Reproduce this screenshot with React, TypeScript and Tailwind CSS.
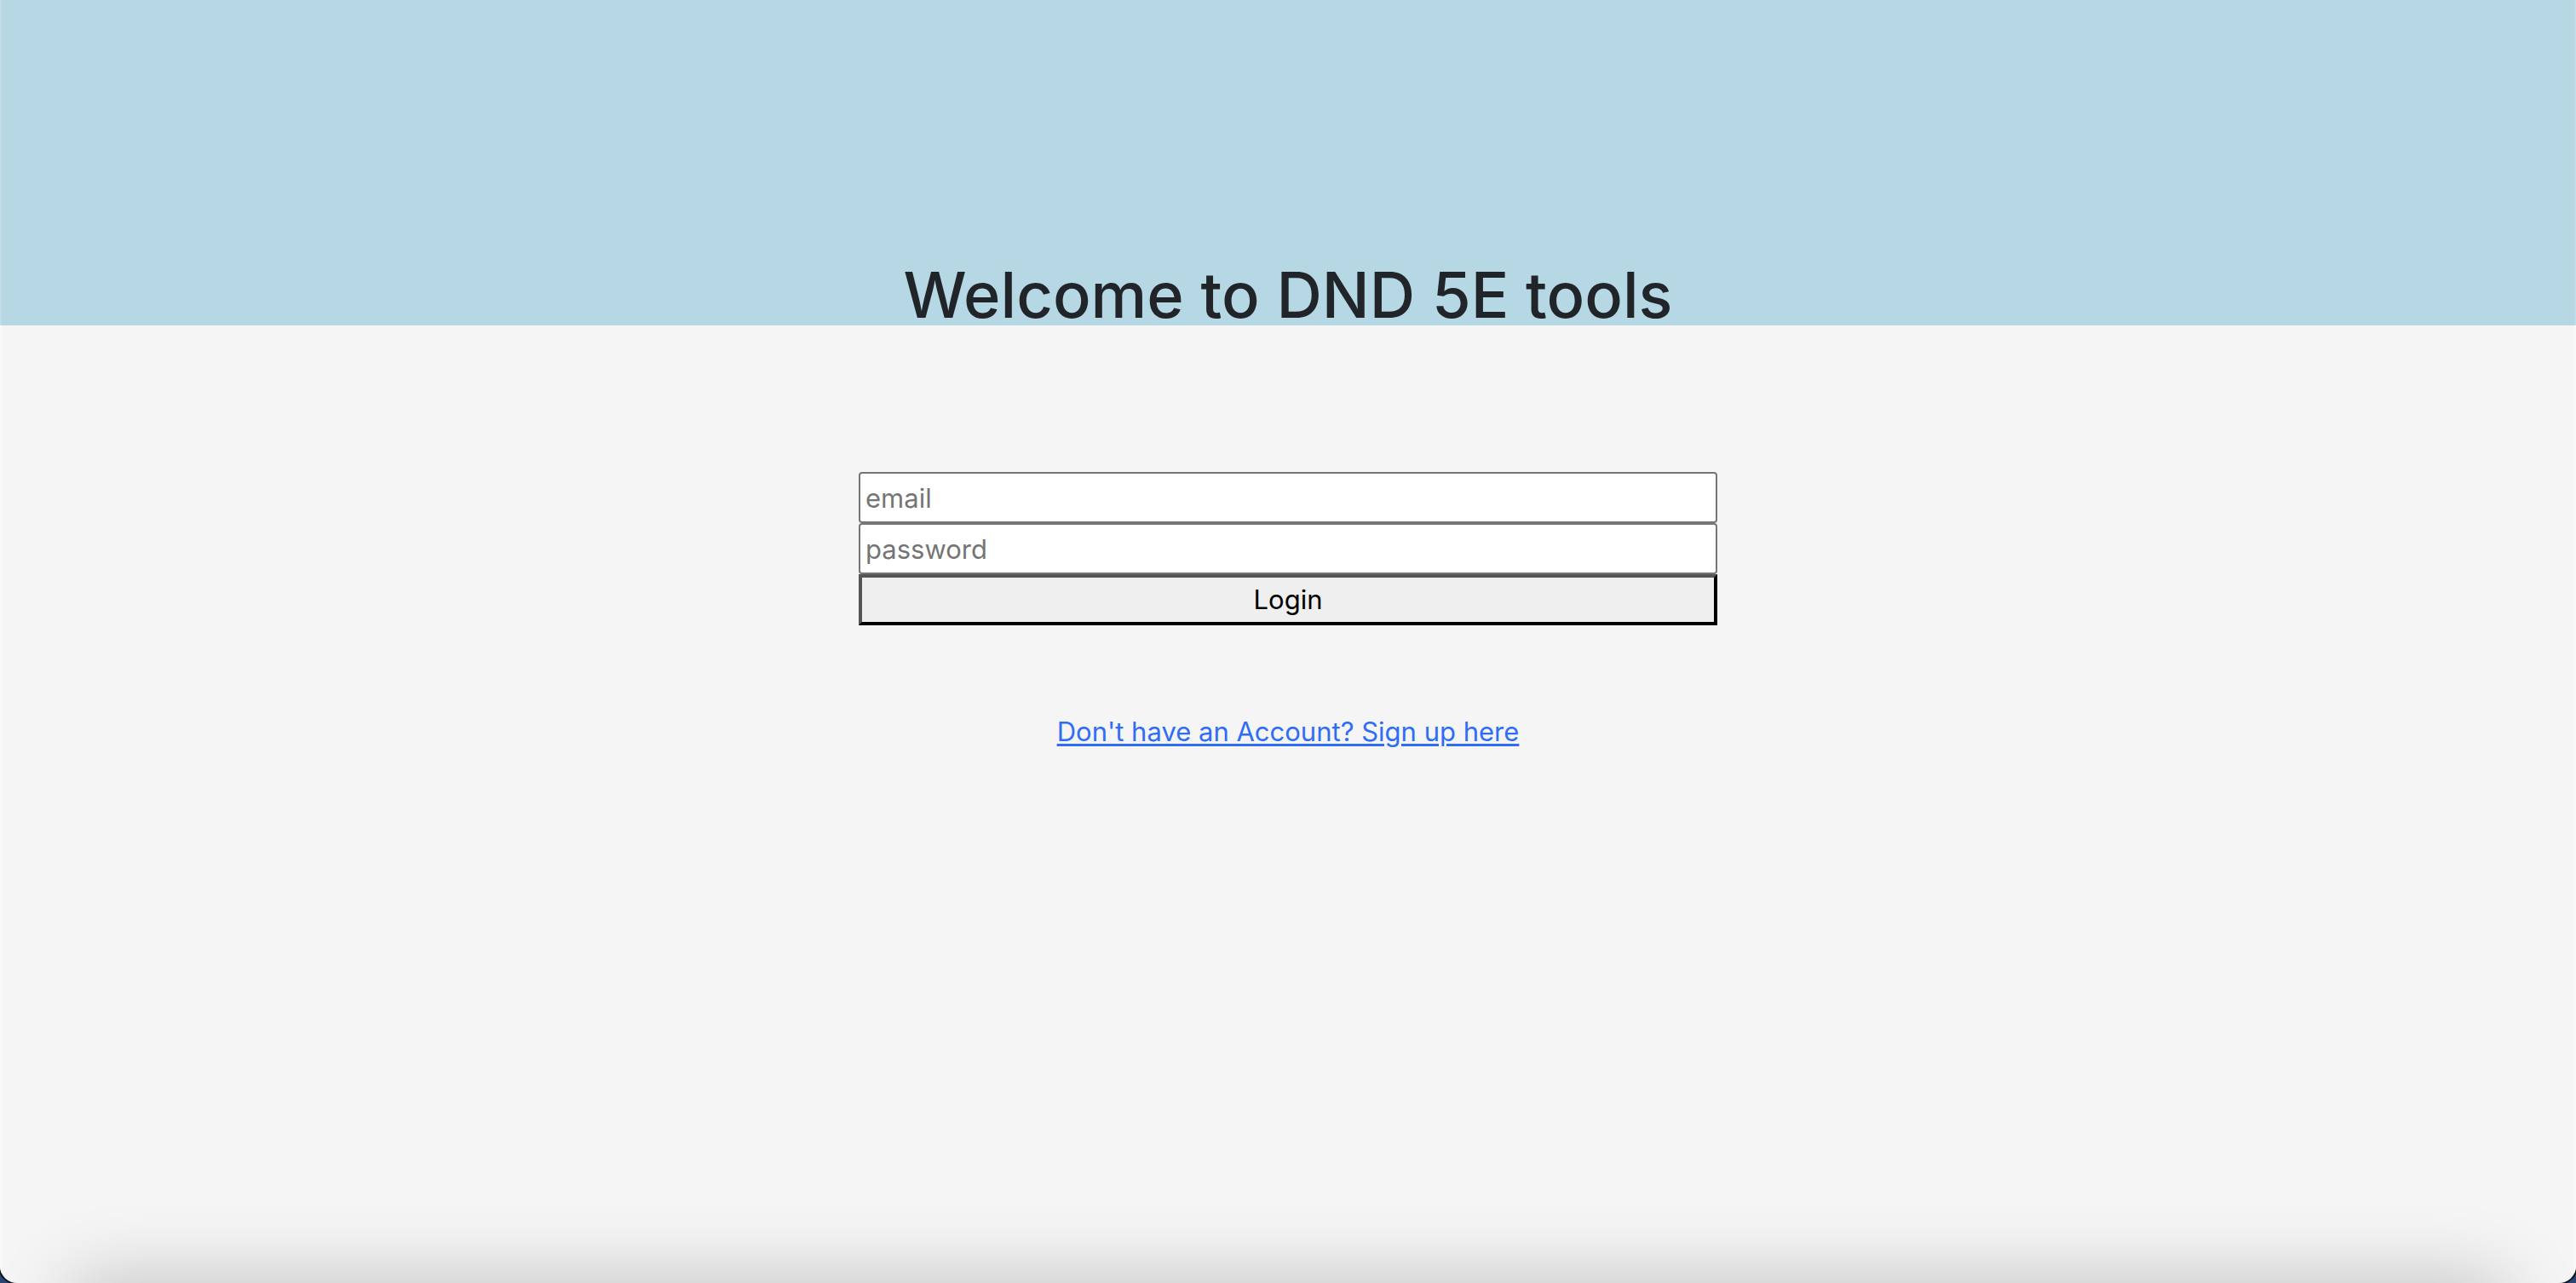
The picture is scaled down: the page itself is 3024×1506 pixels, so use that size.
import React from 'react';

const FIELD =
  'h-[60px] w-full rounded-[4px] border-2 border-[#767676] bg-white px-[6px] text-[31px] leading-[48px] text-black placeholder:text-[#757575]';

export default function App() {
  return (
    <div className="min-h-screen bg-[#2c4470] font-['Inter',sans-serif]">
      <div className="relative flex min-h-screen flex-col overflow-hidden rounded-b-[20px] bg-[#f5f5f5] shadow-[0_0_0_2px_#0b1220]">
        <header className="flex h-[382px] flex-col items-center justify-end bg-[#b5d8e4] shadow-[inset_2px_0_#c3dee8,inset_-2px_0_#c3dee8]">
          <h1 className="mb-[-12px] text-[74px] leading-[96px] font-medium text-[#212529]">
            Welcome to DND 5E tools
          </h1>
        </header>
        <main className="flex flex-1 flex-col items-center pt-[172px] shadow-[inset_2px_0_#f9f9f9,inset_-2px_0_#f9f9f9]">
          <form
            className="flex w-1/3 flex-col"
            onSubmit={(event) => event.preventDefault()}
          >
            <input className={FIELD} type="email" placeholder="email" aria-label="email" />
            <input className={FIELD} type="password" placeholder="password" aria-label="password" />
            <button
              type="submit"
              className="flex h-[60px] items-center justify-center border-4 border-t-[#555] border-r-black border-b-black border-l-[#555] bg-[#efefef] text-[31px] leading-[48px] text-black"
            >
              Login
            </button>
          </form>
          <a
            href="#signup"
            className="mt-[101px] text-[31px] leading-[48px] text-[#2f6df6] underline decoration-[3px] underline-offset-[3px]"
          >
            Don't have an Account? Sign up here
          </a>
        </main>
        <div className="pointer-events-none absolute inset-x-[84px] top-full h-24 shadow-[0_0_90px_rgba(0,0,0,0.23)]" />
      </div>
    </div>
  );
}
